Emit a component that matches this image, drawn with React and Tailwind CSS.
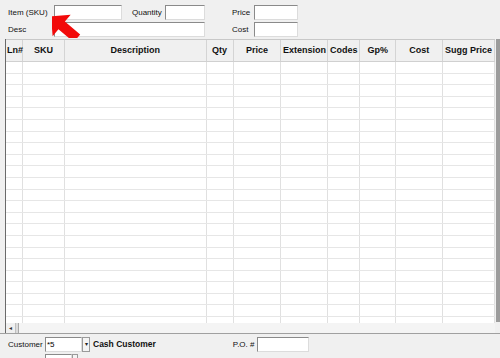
import React from 'react'

const cols = [
  { name: 'Ln#', w: 17, align: 'text-left pl-[1px]' },
  { name: 'SKU', w: 42 },
  { name: 'Description', w: 142 },
  { name: 'Qty', w: 27 },
  { name: 'Price', w: 48 },
  { name: 'Extension', w: 47 },
  { name: 'Codes', w: 32 },
  { name: 'Gp%', w: 36 },
  { name: 'Cost', w: 47 },
  { name: 'Sugg Price', w: 52 },
]

const rows = Array.from({ length: 23 })

function Field({ w, children }) {
  return (
    <div
      className="h-[15px] bg-white border border-t-[#8a8a8a] border-l-[#8a8a8a] border-r-[#dcdcdc] border-b-[#dcdcdc] flex items-center px-[1px] text-[8px] text-black"
      style={{ width: w }}
    >
      {children}
    </div>
  )
}

function Label({ w, children, className = '' }) {
  return (
    <div className={`text-[8px] text-[#111] ${className}`} style={{ width: w }}>
      {children}
    </div>
  )
}

function Arrow() {
  return (
    <svg className="absolute left-[52px] top-[0px]" width="40" height="38" viewBox="0 0 40 38" aria-hidden>
      <g transform="translate(6 8) rotate(40)">
        <polygon points="0,11 14,-3 14,6 34,6 34,16 14,16 14,25" fill="#f20a0a" />
      </g>
    </svg>
  )
}

export default function App() {
  return (
    <div className="w-[500px] h-[358px] overflow-hidden bg-[#f0f0f0] relative" style={{ fontFamily: '"Liberation Sans", Arial, sans-serif' }}>
      {/* Header fields */}
      <div className="pt-[5px] pl-[8px] flex flex-col gap-[2px] h-[39px]">
        <div className="flex items-center">
          <Label w={46}>Item (SKU)</Label>
          <Field w={68} />
          <div className="w-[10px]" />
          <Label w={33}>Quantity</Label>
          <Field w={40} />
          <div className="w-[27px]" />
          <Label w={22}>Price</Label>
          <Field w={44} />
        </div>
        <div className="flex items-center">
          <Label w={46}>Desc</Label>
          <Field w={151} />
          <div className="w-[27px]" />
          <Label w={22}>Cost</Label>
          <Field w={44} />
        </div>
      </div>
      <Arrow />

      {/* Grid */}
      <div className="flex h-[294px]">
        <div className="w-[5px]" />
        <div className="w-[490px] flex flex-col border-l border-l-[#6a6a6a]">
          <div className="flex h-[23px] bg-[#f0f0f0] border-t border-t-[#c8c8c8] border-b border-b-[#d0d0d0]">
            {cols.map(c => (
              <div
                key={c.name}
                className={`h-full flex items-center font-bold text-[9px] text-[#111] border-r border-r-[#d4d4d4] ${c.align ? c.align : 'justify-center'}`}
                style={{ width: c.w }}
              >
                {c.name}
              </div>
            ))}
          </div>
          <div className="flex-1 bg-white overflow-hidden">
            {rows.map((_, r) => (
              <div key={r} className="flex h-[11.6px] border-b border-b-[#e6e6e6]">
                {cols.map(c => (
                  <div key={c.name} className="h-full border-r border-r-[#e0e0e0]" style={{ width: c.w }} />
                ))}
              </div>
            ))}
          </div>
          <div className="h-[10px] bg-white flex items-center">
            <div className="w-[10px] h-full flex items-center justify-center text-[6px] text-[#333] bg-[#f0f0f0] border-r border-r-[#c0c0c0]">◂</div>
            <div className="w-[3px] h-full bg-[#dcdcdc] border-r border-r-[#a8a8a8]" />
            <div className="flex-1 h-full bg-[#f4f4f4]" />
          </div>
        </div>
        <div className="w-[1px]" />
        <div className="w-[4px] h-[283px] bg-[#9c9c9c]" />
      </div>

      {/* Footer */}
      <div className="border-t border-t-[#a0a0a0] h-[1px] bg-white" />
      <div className="pl-[8px] pt-[3px] flex flex-col gap-[2px]">
        <div className="flex items-center">
          <Label w={37}>Customer</Label>
          <Field w={37}>*5</Field>
          <div className="w-[8px] h-[15px] bg-[#f4f4f4] border border-[#9a9a9a] flex items-center justify-center text-[6px] text-[#222]">▾</div>
          <div className="pl-[3px] font-bold text-[8.5px] text-[#111]">Cash Customer</div>
          <div className="w-[77px]" />
          <Label w={24}>P.O. #</Label>
          <Field w={52} />
        </div>
        <div className="flex items-center">
          <div className="w-[37px] h-[15px]" />
          <Field w={27} />
          <div className="w-[6px] h-[15px] bg-[#f4f4f4] border border-[#9a9a9a]" />
        </div>
      </div>
    </div>
  )
}
